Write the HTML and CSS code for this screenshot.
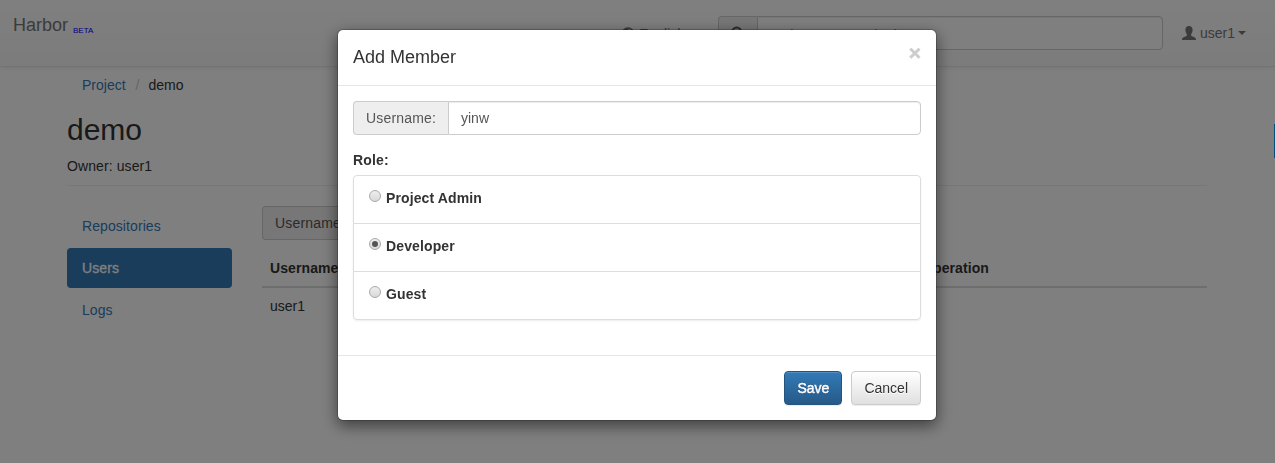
FILE: index.html
```html
<!DOCTYPE html>
<html lang="en">
<head>
<meta charset="utf-8">
<title>Harbor</title>
<link rel="stylesheet" href="styles.css">
</head>
<body>
<nav class="navbar">
  <a class="brand">Harbor <span class="beta">BETA</span></a>
  <div class="nav-right">
    <a class="nav-link language">
      <svg class="icon" viewBox="0 0 14 14"><circle cx="7" cy="7" r="6" fill="none" stroke="currentColor" stroke-width="1.3"/><path d="M2 3.500 5 1l3 .5-1 2-2 1 1 1.500 2 1-1 3-2 2-1-3-2-2zM10 3l2.500 3-1.500 3-1.500-2z" fill="currentColor"/></svg>
      <span>English</span><span class="caret"></span>
    </a>
    <div class="input-group search">
      <span class="addon"><svg class="icon" viewBox="0 0 14 14"><circle cx="5.700" cy="5.700" r="4.300" fill="none" stroke="currentColor" stroke-width="2"/><path d="m9 9 4 4" stroke="currentColor" stroke-width="2.400"/></svg></span>
      <input class="control" type="text" placeholder="projects or repositories">
    </div>
    <a class="nav-link account">
      <svg class="icon" viewBox="0 0 14 14"><path d="M7 0C4.700 0 3.400 1.500 3.400 3.700c0 1.300.4 3 1.400 4.200v1.300c0 .6-.5.9-1.300 1.200C1.200 11.100 0 11.600 0 14h14c0-2.400-1.200-2.900-3.500-3.600-.8-.3-1.300-.6-1.300-1.200V7.900c1-1.200 1.400-2.900 1.400-4.200C10.600 1.500 9.300 0 7 0Z" fill="currentColor"/></svg>
      <span>user1</span><span class="caret"></span>
    </a>
  </div>
</nav>

<main class="container">
  <div class="breadcrumb"><a class="link">Project</a><span class="slash">/</span><span>demo</span></div>
  <h1 class="title">demo</h1>
  <div class="owner">Owner: user1</div>
  <div class="columns">
    <div class="side-nav">
      <a class="side-item">Repositories</a>
      <a class="side-item active">Users</a>
      <a class="side-item">Logs</a>
    </div>
    <div class="content">
      <div class="input-group filter">
        <span class="addon">Username:</span>
        <input class="control" type="text">
      </div>
      <div class="table">
        <div class="row head"><span>Username</span><span>Role</span><span>Operation</span></div>
        <div class="row"><span>user1</span><span>Project Admin</span><span></span></div>
      </div>
    </div>
  </div>
</main>

<div class="edge-tab"></div>
<div class="overlay">
  <div class="modal">
    <div class="modal-header">
      <h4 class="modal-title">Add Member</h4>
      <span class="close">×</span>
    </div>
    <div class="modal-body">
      <div class="input-group">
        <span class="addon">Username:</span>
        <input class="control" type="text" value="yinw">
      </div>
      <div class="role-label">Role:</div>
      <div class="list">
        <label class="list-item"><span class="radio"></span>Project Admin</label>
        <label class="list-item"><span class="radio checked"></span>Developer</label>
        <label class="list-item"><span class="radio"></span>Guest</label>
      </div>
    </div>
    <div class="modal-footer">
      <button class="btn primary">Save</button>
      <button class="btn">Cancel</button>
    </div>
  </div>
</div>
</body>
</html>
```

FILE: styles.css
```css
* { box-sizing: border-box; }
body {
  margin: 0;
  height: 463px;
  overflow: hidden;
  background: #fff;
  color: #333;
  font: 14px/20px "Liberation Sans", Arial, sans-serif;
}
.navbar {
  display: flex;
  justify-content: space-between;
  height: 67px;
  padding: 15px 29px 0 13px;
  border-bottom: 1px solid #e7e7e7;
  background: linear-gradient(#fff, #f8f8f8);
  box-shadow: 0 1px 5px rgba(0, 0, 0, .075);
}
.brand { color: #777; font-size: 18px; }
.beta { color: #00f; font-size: 8px; vertical-align: -2px; }
.nav-right { display: flex; align-items: flex-start; }
.nav-link { display: flex; align-items: center; gap: 4px; height: 36px; color: #777; }
.language { height: 37px; margin-right: 23px; }
.account { margin-left: 19px; }
.account .caret { margin-left: -1px; }
.icon { width: 14px; height: 14px; flex: none; }
.caret {
  margin-left: -2px;
  border: 4px solid transparent;
  border-top-color: currentColor;
  border-bottom: 0;
}
.input-group { display: flex; height: 34px; }
.search { width: 445px; margin-top: 1px; }
.search .control { padding: 8px 12px 4px; }
.addon {
  display: flex;
  align-items: center;
  padding: 0 12px;
  border: 1px solid #ccc;
  border-right: 0;
  border-radius: 4px 0 0 4px;
  background: #eee;
  color: #555;
  letter-spacing: .17px;
}
.control {
  flex: 1;
  min-width: 0;
  padding: 6px 12px;
  border: 1px solid #ccc;
  border-radius: 0 4px 4px 0;
  background: #fff;
  color: #555;
  font: inherit;
  box-shadow: inset 0 1px 1px rgba(0, 0, 0, .075);
}
.control::placeholder { color: #777; }
.container { width: 1140px; margin-left: 67px; padding-top: 8px; }
.breadcrumb { display: flex; padding-left: 15px; }
.link { color: #337ab7; }
.slash { padding: 0 9px 0 10px; color: #ccc; }
.title { margin: 18px 0 10px; font-size: 30px; line-height: 33px; font-weight: 400; }
.owner { padding-bottom: 9px; border-bottom: 1px solid #eee; letter-spacing: .1px; }
.columns { display: flex; gap: 30px; padding-top: 20px; }
.side-nav { display: flex; flex-direction: column; gap: 2px; width: 165px; }
.side-item { padding: 10px 15px; border-radius: 4px; color: #337ab7; letter-spacing: .08px; }
.side-item.active { background: #337ab7; color: #fff; -webkit-text-stroke: .3px #fff; }
.content { flex: 1; }
.filter { width: 400px; }
.table { margin-top: 10px; }
.row {
  display: grid;
  grid-template-columns: 330px 322px 1fr;
  padding: 8px 8px 7px;
  min-height: 36px;
}
.row.head { padding-bottom: 8px; border-bottom: 2px solid #ddd; font-weight: 700; letter-spacing: .1px; }
.edge-tab { position: absolute; top: 124px; right: 0; width: 1px; height: 34px; background: #00a0ff; }
.overlay { position: fixed; inset: 0; padding: 29px 0 0 337px; background: rgba(0, 0, 0, .5); }
.modal {
  width: 600px;
  height: 392px;
  border: 1px solid rgba(0, 0, 0, .2);
  border-radius: 6px;
  background: #fff;
  background-clip: padding-box;
  box-shadow: 0 5px 15px rgba(0, 0, 0, .5);
}
.modal-header {
  display: flex;
  justify-content: space-between;
  height: 56px;
  padding: 14px 15px 0;
  border-bottom: 1px solid #e5e5e5;
}
.modal-title { margin: 0; font-size: 18px; line-height: 26px; font-weight: 400; }
.close {
  color: #ccc;
  font-size: 21px;
  line-height: 18px;
  font-weight: 700;
  text-shadow: 0 1px 0 #fff;
  -webkit-text-stroke: .5px #ccc;
}
.modal-body { height: 269px; padding: 15px; }
.role-label { margin: 15px 0 5px; font-weight: 700; letter-spacing: .15px; }
.list { border: 1px solid #ddd; border-radius: 4px; box-shadow: 0 1px 2px rgba(0, 0, 0, .075); }
.list-item {
  display: flex;
  gap: 5px;
  height: 48px;
  padding: 12px 15px;
  font-weight: 700;
  letter-spacing: .12px;
}
.list-item + .list-item { border-top: 1px solid #ddd; }
.list-item:first-child { height: 47px; }
.radio {
  display: flex;
  align-items: center;
  justify-content: center;
  width: 12px;
  height: 12px;
  margin-top: 2px;
  border: 1px solid #aaa;
  border-radius: 50%;
  background: linear-gradient(#eee, #d9d9d9);
}
.radio.checked::after { content: ""; width: 6px; height: 6px; border-radius: 50%; background: #555; }
.modal-footer {
  display: flex;
  justify-content: flex-end;
  gap: 9px;
  padding: 15px;
  border-top: 1px solid #e5e5e5;
}
.btn {
  height: 34px;
  padding: 0 12px;
  border: 1px solid #ccc;
  border-radius: 4px;
  background: linear-gradient(#fff, #e0e0e0);
  color: #333;
  font: inherit;
  text-shadow: 0 1px 0 #fff;
  box-shadow: inset 0 1px 0 rgba(255, 255, 255, .15), 0 1px 1px rgba(0, 0, 0, .075);
}
.btn.primary {
  border-color: #245580;
  background: linear-gradient(#337ab7, #265a88);
  color: #fff;
  text-shadow: 0 -1px 0 rgba(0, 0, 0, .2);
  -webkit-text-stroke: .4px #fff;
}
```
